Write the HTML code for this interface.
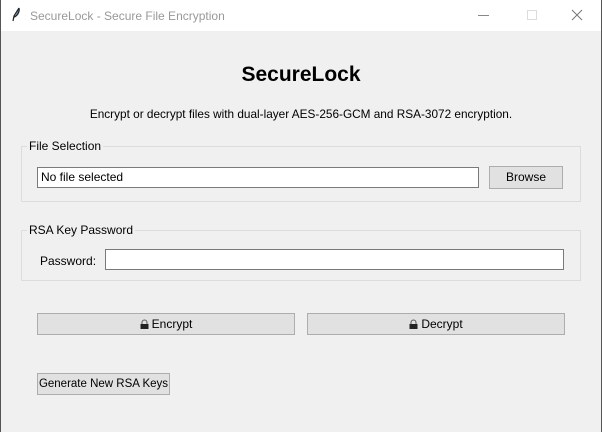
<!DOCTYPE html>
<html><head><style>
*{margin:0;padding:0;box-sizing:border-box}
body{width:602px;height:432px;background:#f0f0f0;font-family:"Liberation Sans",sans-serif;font-size:12px;color:#000;position:relative;overflow:hidden}
.a{position:absolute;white-space:nowrap}
.title{left:0;top:0;width:602px;height:31px;background:#fff}
.btn{position:absolute;background:#e1e1e1;border:1px solid #adadad;text-align:center;line-height:20px;font-size:12px;white-space:nowrap}
.frame{position:absolute;border:1px solid #dcdcdc}
.lbl{position:absolute;background:#f0f0f0;padding:0 2px;font-size:12px;white-space:nowrap}
.entry{position:absolute;background:#fff;border:1px solid #7a7a7a;line-height:19px;padding-left:3px}
.lk{display:inline-block;vertical-align:-1px;margin-right:3px}
</style></head><body>
<div class="a title"></div>
<div class="a" style="left:0;top:0;width:1px;height:432px;background:#555"></div>
<div class="a" style="left:601px;top:0;width:1px;height:432px;background:#555"></div>
<svg class="a" style="left:11px;top:7px" width="10" height="16"><path d="M8 1 L3 9 L2 14 M8 1 C9 5 6 9 3 10" stroke="#222" fill="#6a9be0" stroke-width="1.2"/></svg>
<div class="a" style="left:30px;top:9px;color:#999;font-size:12px">SecureLock - Secure File Encryption</div>
<div class="a" style="left:478px;top:15px;width:11px;height:1px;background:#888"></div>
<div class="a" style="left:527px;top:10px;width:10px;height:10px;border:1px solid #ddd"></div>
<svg class="a" style="left:571px;top:9px" width="12" height="12"><path d="M1 1L11 11M11 1L1 11" stroke="#777" stroke-width="1"/></svg>
<div class="a" style="left:0;top:63px;width:602px;text-align:center;font-weight:bold;font-size:21px">SecureLock</div>
<div class="a" style="left:0;top:107px;width:602px;text-align:center;font-size:11.8px">Encrypt or decrypt files with dual-layer AES-256-GCM and RSA-3072 encryption.</div>
<div class="frame" style="left:21px;top:146px;width:560px;height:56px"></div>
<div class="lbl" style="left:27px;top:139px">File Selection</div>
<div class="entry" style="left:37px;top:167px;width:442px;height:21px">No file selected</div>
<div class="btn" style="left:489px;top:166px;width:74px;height:23px">Browse</div>
<div class="frame" style="left:21px;top:230px;width:560px;height:51px"></div>
<div class="lbl" style="left:27px;top:223px">RSA Key Password</div>
<div class="a" style="left:40px;top:254px">Password:</div>
<div class="entry" style="left:105px;top:249px;width:459px;height:21px"></div>
<div class="btn" style="left:37px;top:313px;width:258px;height:22px"><svg class="lk" width="9" height="10"><path d="M2 5V3.5a2.5 2.5 0 0 1 5 0V5" fill="none" stroke="#555"/><rect x="0.5" y="5" width="8" height="5" fill="#222"/></svg>Encrypt</div>
<div class="btn" style="left:307px;top:313px;width:258px;height:22px"><svg class="lk" width="9" height="10"><path d="M2 5V3.5a2.5 2.5 0 0 1 5 0V5" fill="none" stroke="#555"/><rect x="0.5" y="5" width="8" height="5" fill="#222"/></svg>Decrypt</div>
<div class="btn" style="left:37px;top:373px;width:133px;height:22px;font-size:11.5px">Generate New RSA Keys</div>
</body></html>
